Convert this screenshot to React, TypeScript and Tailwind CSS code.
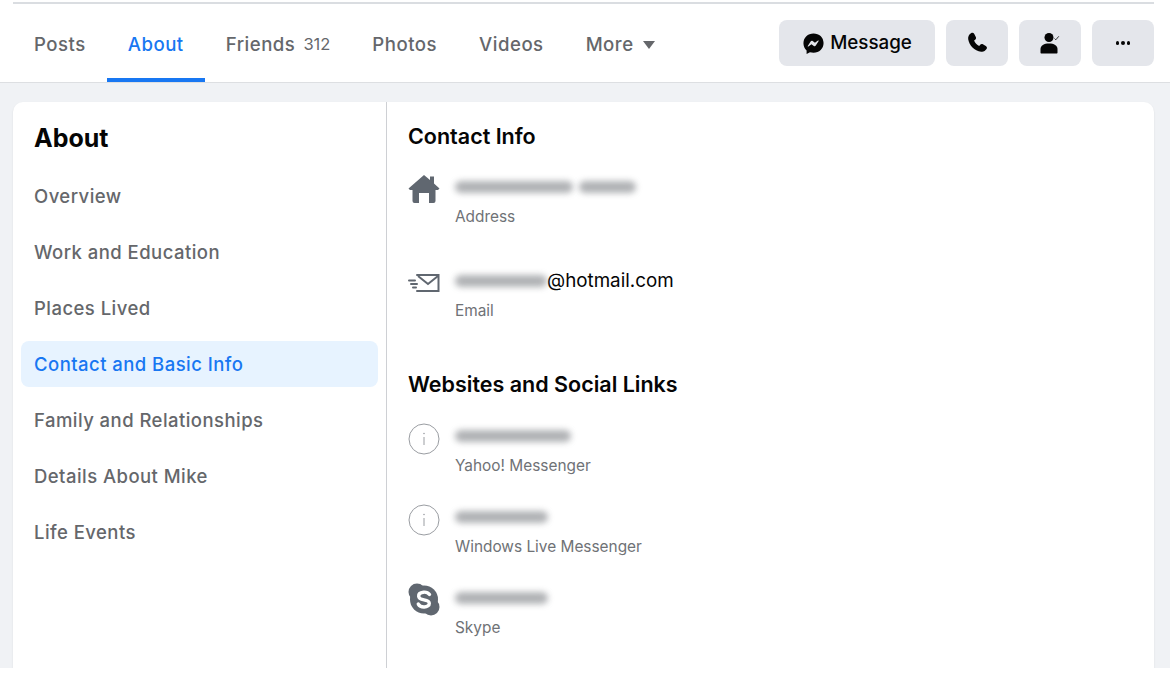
import { ReactNode } from "react";

// redacted values in the reference are smudged, so these are just blurred bars
const Blur = ({ className }: { className: string }) => (
  <span className={`block h-[12px] rounded-full bg-[#8f9296] opacity-70 blur-[3px] ${className}`} />
);

const HomeIcon = () => (
  <svg viewBox="0 0 32 30" className="w-8 h-[30px] -mt-[1px]" fill="#606770">
    <path d="M16 1 L22 6 V2.500 H26 V9.500 L31.500 14.500 L30 16 H27.500 V27 Q27.500 29 25.500 29 H21 V19 H11 V29 H6.500 Q4.500 29 4.500 27 V16 H2 L0.500 14.500 Z" />
  </svg>
);

const MailIcon = () => (
  <svg viewBox="0 0 32 20" className="w-8 h-5" fill="none" stroke="#606770" strokeWidth="2">
    <path d="M9 2 H30.500 V18 H9" strokeLinecap="round" />
    <path d="M10 3 L20 11 L30 3" />
    <path d="M1 7.500 H7 M3 11 H9 M5 14.500 H8" strokeLinecap="round" />
  </svg>
);

const InfoIcon = () => (
  <svg viewBox="0 0 32 32" className="w-8 h-8 -mt-[1px]" fill="none" stroke="#9a9da2" strokeWidth="1">
    <circle cx="16" cy="16" r="15" />
    <circle cx="16" cy="10.500" r="0.800" fill="#9a9da2" stroke="none" />
    <path d="M16 14 V22" />
  </svg>
);

const SkypeIcon = () => (
  <svg viewBox="0 0 32 33" className="w-8 h-[33px] -mt-[3px]" fill="#606770">
    <circle cx="9" cy="9" r="8.500" />
    <circle cx="23" cy="24" r="8.500" />
    <circle cx="16" cy="16.500" r="14" />
    <path
      d="M21.500 11.500C20 9.500 17.500 9 15.500 9.200c-3 .3-5 1.900-4.800 4.100.2 2.300 2.600 3 5.300 3.500 2.800.5 5.200 1.200 5.300 3.500.1 2.200-2.200 3.600-5 3.700-2.400.1-4.800-.7-6-2.900"
      fill="none"
      stroke="white"
      strokeWidth="3.400"
      strokeLinecap="round"
    />
  </svg>
);

const MessengerIcon = () => (
  <svg viewBox="0 0 24 24" className="w-[23px] h-[23px]">
    <path
      fill="#050505"
      d="M12 1.500C6.100 1.500 1.500 5.800 1.500 11.700c0 3 1.200 5.700 3.300 7.600v3.700l3.500-1.900c1.200.3 2.400.5 3.700.5 5.900 0 10.500-4.300 10.500-10.200S17.900 1.500 12 1.500z"
    />
    <path fill="#e4e6eb" d="M6 14.500l3-4.600c.5-.7 1.400-.9 2.100-.4l2.400 1.800 3.200-2.400c.4-.3 1 .2.700.6l-3 4.600c-.5.7-1.400.9-2.100.4l-2.400-1.800-3.200 2.400c-.4.3-1-.2-.700-.6z" />
  </svg>
);

const PhoneIcon = () => (
  <svg viewBox="0 0 24 24" className="w-[24px] h-[24px]" fill="#050505">
    <path d="M6 2.200c1.300-.8 2.600-.5 3.300.8l1.500 3c.5 1 .3 2-.6 2.700l-1.100.9c.8 2.300 2.900 4.500 5.100 5.300l1-1.100c.7-.8 1.800-1 2.700-.5l2.900 1.600c1.300.7 1.500 2 .7 3.200-1.200 1.800-3 3.100-5.300 2.700C9.200 19.800 4.300 14.300 3.200 8.200 2.800 5.800 4 3.400 6 2.200z" />
  </svg>
);

const FriendIcon = () => (
  <svg viewBox="0 0 24 24" className="w-[24px] h-[24px]" fill="#050505">
    <circle cx="11" cy="6.500" r="4.500" />
    <path d="M2.500 21.500v-3.500c0-3.500 3.500-5.500 8.500-5.500s8.500 2 8.500 5.500v3.500c0 .6-.4 1-1 1h-15c-.6 0-1-.4-1-1z" />
    <path d="M16.500 7.500l1.300 1.300 3-3.500" fill="none" stroke="#050505" strokeWidth="0.800" />
  </svg>
);

const Tab = ({ children, active }: { children: ReactNode; active?: boolean }) => (
  <div className={`relative h-full px-[21px] pt-[3px] flex items-center text-[18.600px] tracking-[0.500px] font-medium ${active ? "text-[#1877f2]" : "text-[#65676b]"}`}>
    {children}
    {active && <div className="absolute left-0 right-0 bottom-0 h-[4px] bg-[#1877f2]" />}
  </div>
);

const ActionBtn = ({ children }: { children: ReactNode }) => (
  <div className="w-[62px] h-[46px] rounded-[8px] bg-[#e4e6eb] flex items-center justify-center">{children}</div>
);

const NavItem = ({ children, active }: { children: ReactNode; active?: boolean }) => (
  <div className={`h-[46px] mb-[10px] px-[13px] pt-[2px] flex items-center rounded-[8px] text-[18.500px] tracking-[0.450px] font-medium ${active ? "bg-[#e7f3ff] text-[#1877f2]" : "text-[#65676b]"}`}>
    {children}
  </div>
);

const Row = ({ icon, value, label, extra }: { icon: ReactNode; value: ReactNode; label: string; extra: string }) => (
  <div className={`flex ${extra}`}>
    <div className="w-8 mr-[15px] flex justify-center shrink-0">{icon}</div>
    <div>
      <div className="h-[24px] flex items-center text-[18.800px] text-[#050505]">{value}</div>
      <div className="mt-[9px] text-[15.400px] leading-[18px] text-[#6f7276]">{label}</div>
    </div>
  </div>
);

export default function App() {
  return (
    <div className="w-[1173px] h-[677px] bg-white overflow-hidden font-['Inter','Liberation_Sans',sans-serif]">
      <div className="h-[668px] w-[1170px] bg-[#f0f2f5] flex flex-col overflow-hidden">
        <div className="h-[83px] bg-white border-b border-[#dddfe2] shrink-0 pt-[2px]">
          <div className="h-[2px] ml-[13px] mr-[16px] bg-[#dadde1]" />
          <div className="h-[78px] flex items-center justify-between pl-[13px] pr-[16px]">
            <div className="flex h-full">
              <Tab>Posts</Tab>
              <Tab active>About</Tab>
              <Tab>
                Friends <span className="ml-[8px] text-[16.500px] font-normal tracking-normal">312</span>
              </Tab>
              <Tab>Photos</Tab>
              <Tab>Videos</Tab>
              <Tab>
                More
                <svg viewBox="0 0 12 8" className="w-[14px] h-2 ml-[8px]" fill="#65676b">
                  <path d="M0 0 H12 L6 8 Z" />
                </svg>
              </Tab>
            </div>
            <div className="flex gap-[11px]">
              <div className="w-[156px] h-[46px] rounded-[8px] bg-[#e4e6eb] pt-[1px] flex items-center justify-center gap-[5px] text-[18.800px] font-medium text-[#050505]">
                <MessengerIcon />
                Message
              </div>
              <ActionBtn><PhoneIcon /></ActionBtn>
              <ActionBtn><FriendIcon /></ActionBtn>
              <ActionBtn>
                <div className="flex gap-[2px]">
                  <span className="w-[3.500px] h-[3.500px] rounded-full bg-[#050505]" />
                  <span className="w-[3.500px] h-[3.500px] rounded-full bg-[#050505]" />
                  <span className="w-[3.500px] h-[3.500px] rounded-full bg-[#050505]" />
                </div>
              </ActionBtn>
            </div>
          </div>
        </div>
        <div className="flex-1 pl-[13px] pt-[19px] pr-[16px] flex min-h-0">
          <div className="flex-1 bg-white rounded-t-[10px] flex shadow-[0_1px_2px_rgba(0,0,0,0.1)]">
            <div className="w-[374px] border-r border-[#ced0d4] shrink-0 px-[8px] pt-[20px]">
              <div className="px-[13px] text-[25px] leading-[32px] font-bold text-[#050505] mb-[19px]">About</div>
              <NavItem>Overview</NavItem>
              <NavItem>Work and Education</NavItem>
              <NavItem>Places Lived</NavItem>
              <NavItem active>Contact and Basic Info</NavItem>
              <NavItem>Family and Relationships</NavItem>
              <NavItem>Details About Mike</NavItem>
              <NavItem>Life Events</NavItem>
            </div>
            <div className="flex-1 pl-[21px] pt-[20px]">
              <div className="text-[21.500px] leading-[28px] font-semibold text-[#050505]">Contact Info</div>
              <Row
                extra="mt-[25px]"
                icon={<HomeIcon />}
                value={
                  <span className="flex gap-[6px]">
                    <Blur className="w-[118px]" />
                    <Blur className="w-[57px]" />
                  </span>
                }
                label="Address"
              />
              <Row
                extra="mt-[43px]"
                icon={<div className="pt-[4px]"><MailIcon /></div>}
                value={<><Blur className="w-[92px]" /><span>@hotmail.com</span></>}
                label="Email"
              />
              <div className="mt-[50px] text-[21.500px] leading-[28px] font-semibold text-[#050505]">Websites and Social Links</div>
              <Row extra="mt-[26px]" icon={<InfoIcon />} value={<Blur className="w-[116px]" />} label="Yahoo! Messenger" />
              <Row extra="mt-[30px]" icon={<InfoIcon />} value={<Blur className="w-[93px]" />} label="Windows Live Messenger" />
              <Row extra="mt-[30px]" icon={<SkypeIcon />} value={<Blur className="w-[93px]" />} label="Skype" />
            </div>
          </div>
        </div>
      </div>
    </div>
  );
}
